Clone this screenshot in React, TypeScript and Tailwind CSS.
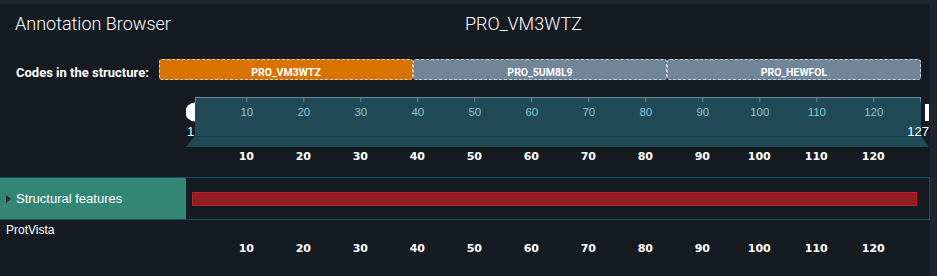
import React from 'react';

const TICKS = [10, 20, 30, 40, 50, 60, 70, 80, 90, 100, 110, 120];
// x inside the 743px wide track area that starts at page x 186
const tickX = (v: number) => 9.5 + (v - 1) * 5.7;

const CODES = [
  { code: 'PRO_VM3WTZ', active: true },
  { code: 'PRO_5UM8L9', active: false },
  { code: 'PRO_HEWFOL', active: false },
];

function Navigation() {
  return (
    <svg width={743} height={52} className="block">
      <circle cx={9} cy={17} r={9.5} fill="#ffffff" />
      <rect x={9} y={2} width={726} height={40} fill="#1f4a56" />
      <line x1={9} y1={2.5} x2={735} y2={2.5} stroke="#6b8b94" strokeWidth={1} />
      <polygon points="9,41 735,41 743,52 0,52" fill="#1f4b57" />
      <line x1={9} y1={41.5} x2={735} y2={41.5} stroke="#1a3f4a" strokeWidth={1} />
      <line x1={9.5} y1={2} x2={9.5} y2={7} stroke="#6b8b94" />
      <line x1={734.5} y1={2} x2={734.5} y2={7} stroke="#6b8b94" />
      {TICKS.map((t) => (
        <g key={t}>
          <line x1={tickX(t)} y1={2} x2={tickX(t)} y2={7} stroke="#6b8b94" />
          <text
            x={tickX(t)}
            y={21}
            textAnchor="middle"
            fill="#8fc6d5"
            fontSize={11.5}
            fontFamily="'Liberation Sans', Arial, sans-serif"
          >
            {t}
          </text>
        </g>
      ))}
      <rect x={739} y={9} width={4} height={17} fill="#ffffff" />
      <text x={1} y={41} fill="#ffffff" fontSize={13} fontFamily="'Liberation Sans', Arial, sans-serif">
        1
      </text>
      <text x={743} y={41} textAnchor="end" fill="#ffffff" fontSize={13} fontFamily="'Liberation Sans', Arial, sans-serif">
        127
      </text>
    </svg>
  );
}

function Axis() {
  return (
    <svg width={743} height={18} className="block">
      {TICKS.map((t) => (
        <text
          key={t}
          x={tickX(t) - 0.5}
          y={13}
          textAnchor="middle"
          fill="#ffffff"
          fontSize={11}
          fontWeight={700}
          fontFamily="'DejaVu Sans', sans-serif"
        >
          {t}
        </text>
      ))}
    </svg>
  );
}

export default function App() {
  return (
    <div className="w-[937px] h-[276px] bg-[#161b22] flex flex-col overflow-hidden font-['Liberation_Sans',Arial,sans-serif] text-white">
      <div className="h-[4px] bg-[#1f262d] shrink-0" />
      <div className="flex flex-1 min-h-0">
        <div className="flex-1 flex flex-col">
          <div className="h-[41px] grid grid-cols-2 pt-[8px] font-['Roboto',sans-serif] font-light text-[18px] leading-[24px]">
            <div className="pl-[15px]">Annotation Browser</div>
            <div>PRO_VM3WTZ</div>
          </div>

          <div className="mt-[14px] h-[21px] flex items-center">
            <div className="w-[159px] pl-[16px] pt-[5px] text-[13px] font-bold font-['Roboto',sans-serif] leading-none whitespace-nowrap">
              Codes in the structure:
            </div>
            <div className="w-[762px] h-[21px] flex">
              {CODES.map((c) => (
                <div
                  key={c.code}
                  className={
                    'flex-1 flex items-center justify-center pt-[7px] border border-dashed border-[#c9d0d8] rounded-[3px] text-[10.5px] font-bold font-["Roboto",sans-serif] leading-none ' +
                    (c.active ? 'bg-[#d97300]' : 'bg-[#718599]')
                  }
                >
                  {c.code}
                </div>
              ))}
            </div>
          </div>

          <div className="mt-[15px] flex">
            <div className="w-[186px] shrink-0" />
            <Navigation />
          </div>
          <div className="flex">
            <div className="w-[186px] shrink-0" />
            <Axis />
          </div>

          <div className="mt-[12px] h-[43px] flex border-y border-[#0c5068]">
            <div className="w-[186px] shrink-0 bg-[#338673] flex items-center gap-[5px] pl-[6px] text-[13px]">
              <span className="w-0 h-0 border-y-[4px] border-y-transparent border-l-[5px] border-l-[#2c2c2c]" />
              <span>Structural features</span>
            </div>
            <div className="flex-1 border-r border-[#0c5068] pl-[6px] pr-[12px] flex items-center">
              <div className="w-full h-[14px] bg-[#921d23] border border-[#b9242b]" />
            </div>
          </div>

          <div className="pl-[6px] pt-[2px] h-[19px] text-[12px] leading-[16px]">ProtVista</div>
          <div className="flex">
            <div className="w-[186px] shrink-0" />
            <Axis />
          </div>
        </div>
        <div className="w-[7px] bg-[#20262d] shrink-0" />
      </div>
    </div>
  );
}
